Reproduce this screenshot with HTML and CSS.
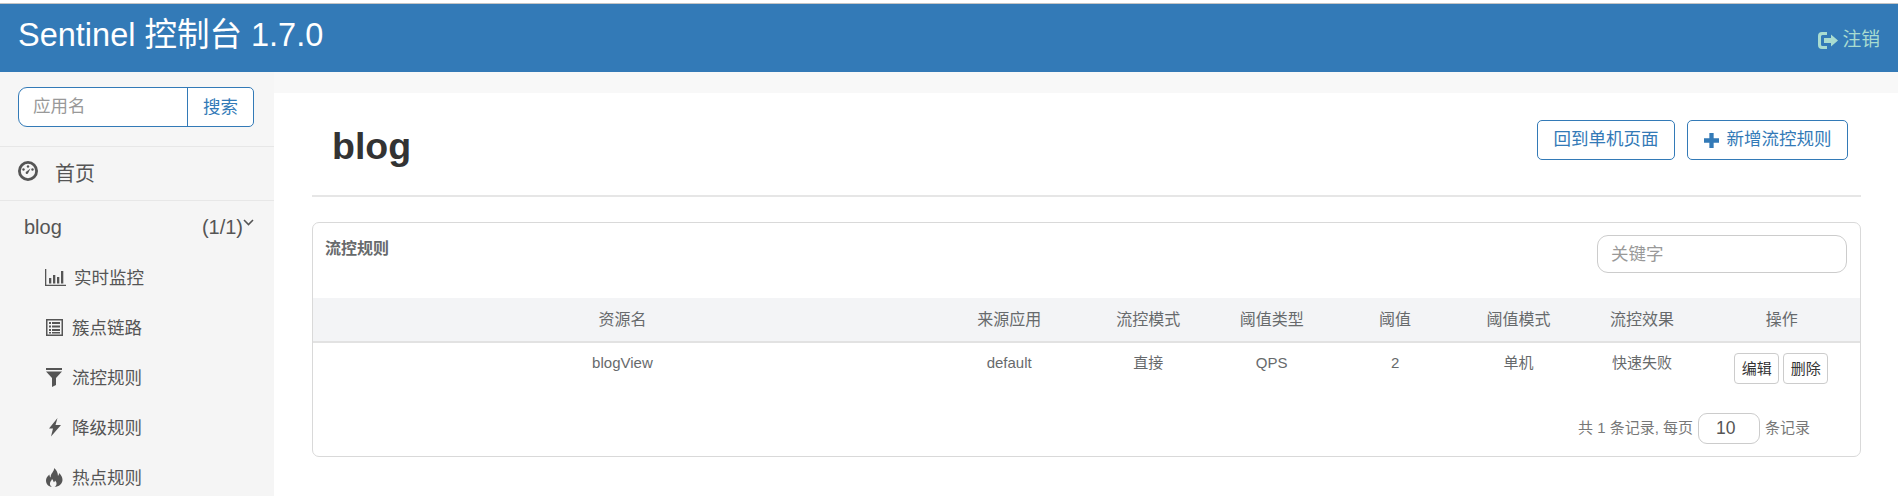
FILE: index.html
```html
<!DOCTYPE html>
<html lang="zh-CN">
<head>
<meta charset="utf-8">
<title>Sentinel 控制台</title>
<link rel="stylesheet" href="styles.css">
</head>
<body>
<header class="topbar">
  <span class="brand">Sentinel 控制台 1.7.0</span>
  <a class="logout">
    <svg class="logout-icon" viewBox="0 0 20 17"><path d="M4 0h5v3H4.500A1.500 1.500 0 0 0 3 4.500v8A1.500 1.500 0 0 0 4.500 14H9v3H4a4 4 0 0 1-4-4V4a4 4 0 0 1 4-4z"/><path d="M6 6h7V2.500l7 6-7 6V11H6z"/></svg>注销
  </a>
</header>
<div class="layout">
  <aside class="sidebar">
    <div class="side-search">
      <div class="search-group">
        <span class="search-input">应用名</span>
        <span class="search-btn">搜索</span>
      </div>
    </div>
    <div class="home-row">
      <svg class="home-icon" viewBox="0 0 20 20"><circle cx="10" cy="10" r="8.600" fill="none" stroke="#555" stroke-width="2.800"/><circle cx="10" cy="5.500" r="1.200"/><circle cx="5.500" cy="8.500" r="1.200"/><circle cx="14.500" cy="8.500" r="1.200"/><path d="M8.500 10.500l4-3-2.300 4.600a1.300 1.300 0 1 1-1.700-1.600z"/></svg>
      <span>首页</span>
    </div>
    <div class="app-row">
      <span>blog</span>
      <span class="app-count">(1/1)<svg class="chevron" viewBox="0 0 11 7"><path d="M1 1l4.500 4.500L10 1" fill="none" stroke="#555" stroke-width="1.600"/></svg></span>
    </div>
    <nav class="submenu">
      <div class="sub-row sub-row-first">
        <svg class="sub-icon icon-stats" viewBox="0 0 21 17"><path d="M0 0h1.300v15.700H21V17H0z"/><rect x="4" y="9" width="2.300" height="5.500"/><rect x="8" y="6" width="2.300" height="8.500"/><rect x="12" y="8" width="2.300" height="6.500"/><rect x="16" y="2" width="2.300" height="12.500"/></svg>
        <span>实时监控</span>
      </div>
      <div class="sub-row">
        <svg class="sub-icon" viewBox="0 0 17 19"><path fill-rule="evenodd" d="M0 1h17v17H0zM1.500 2.500v14h14v-14z"/><path d="M3 4h2v2H3zM6 4h8v2H6zM3 7.500h2v2H3zM6 7.500h8v2H6zM3 11h2v2H3zM6 11h8v2H6zM3 14h2v1.500H3zM6 14h8v1.500H6z"/></svg>
        <span>簇点链路</span>
      </div>
      <div class="sub-row">
        <svg class="sub-icon" viewBox="0 0 17 19"><path d="M0 0h16v2H0zM0 3.500h16L10 10v7l-4 2v-9z"/></svg>
        <span>流控规则</span>
      </div>
      <div class="sub-row">
        <svg class="sub-icon" viewBox="0 0 17 19"><path d="M11.500 0L9.500 7H15L5 18.500 7 10.500H3z"/></svg>
        <span>降级规则</span>
      </div>
      <div class="sub-row">
        <svg class="sub-icon" viewBox="0 0 17 19"><path d="M8 0c.8 3-3.800 5.500-3.300 9.500C3.800 8.800 3.400 7.600 3.500 6.500 1 8.500 0 10.500 0 12.500 0 16 2.500 18.500 6 19c-1.500-1-2.300-2.400-2-4 .3-1.400 1.500-2.300 2-4 1.500 1.500 1.200 2.800 2 3.300.6-.3.900-.9 1-1.800 1 1 1.500 2 1.500 3.200 0 1.400-.7 2.500-2 3.300 4.500-.3 8-3.300 8-7 0-3-1.300-5-3.500-7 .1 1.200-.3 2.200-1 3C11.800 5 11 2 8 0z"/></svg>
        <span>热点规则</span>
      </div>
    </nav>
  </aside>
  <main class="main">
    <div class="page-head">
      <h1 class="page-title">blog</h1>
      <div class="page-actions">
        <a class="btn-outline">回到单机页面</a>
        <a class="btn-outline btn-add"><svg class="plus-icon" viewBox="0 0 14 14"><path d="M5 0h4v5h5v4H9v5H5V9H0V5h5z"/></svg>新增流控规则</a>
      </div>
    </div>
    <section class="card">
      <div class="card-head">
        <span class="card-title">流控规则</span>
        <span class="keyword">关键字</span>
      </div>
      <table class="rules">
        <colgroup>
          <col class="col-wide"><col class="col-mid"><col class="col-sm"><col class="col-sm"><col class="col-sm"><col class="col-sm"><col class="col-sm"><col class="col-last">
        </colgroup>
        <thead>
          <tr><th>资源名</th><th>来源应用</th><th>流控模式</th><th>阈值类型</th><th>阈值</th><th>阈值模式</th><th>流控效果</th><th>操作</th></tr>
        </thead>
        <tbody>
          <tr>
            <td>blogView</td><td>default</td><td>直接</td><td>QPS</td><td>2</td><td>单机</td><td>快速失败</td>
            <td class="ops"><a class="btn-mini">编辑</a><a class="btn-mini">删除</a></td>
          </tr>
        </tbody>
      </table>
      <div class="pager">
        <span>共 1 条记录, 每页</span>
        <span class="page-size">10</span>
        <span>条记录</span>
      </div>
    </section>
  </main>
</div>
</body>
</html>
```

FILE: styles.css
```css
* { box-sizing: border-box; }
body {
  margin: 0;
  height: 496px;
  overflow: hidden;
  background: #fff;
  color: #555;
  font-family: "Liberation Sans", "Noto Sans CJK SC", sans-serif;
  font-size: 17.5px;
  line-height: 1.25;
}
.topbar {
  height: 69px;
  margin: 3px 1px 0 0;
  padding: 0 18px;
  border-top: 1px solid #c4c4c4;
  background: #337ab7;
  display: flex;
  justify-content: space-between;
  align-items: center;
}
.brand { color: #fff; font-size: 32.5px; position: relative; top: -3px; }
.logout {
  color: #a9dcd0;
  font-size: 18.75px;
  display: flex;
  align-items: center;
  gap: 5px;
  position: relative;
  top: 2px;
}
.logout-icon { width: 20px; height: 17px; fill: #a9dcd0; }
.layout { display: flex; height: 424px; margin-right: 1px; background: #f8f8f8; }
.sidebar { width: 274px; flex: none; background: #f5f5f5; }
.side-search {
  height: 75px;
  padding: 15px 20px 0 18px;
  border-bottom: 1px solid #e7e7e7;
  background: #f6f6f6;
}
.search-group {
  display: flex;
  height: 40px;
  border: 1px solid #337ab7;
  border-radius: 9px 5px 5px 9px;
  background: #fff;
  overflow: hidden;
}
.search-input {
  flex: 1;
  padding-left: 14px;
  color: #999;
  line-height: 36px;
}
.search-btn {
  width: 66px;
  border-left: 1px solid #337ab7;
  color: #337ab7;
  text-align: center;
  line-height: 38px;
}
.home-row {
  height: 54px;
  display: flex;
  align-items: center;
  gap: 17px;
  padding: 1px 0 0 18px;
  font-size: 20px;
  border-bottom: 1px solid #e7e7e7;
}
.home-icon { width: 20px; height: 20px; fill: #555; flex: none; position: relative; top: -3px; }
.app-row {
  height: 53px;
  display: flex;
  justify-content: space-between;
  align-items: center;
  padding: 0 20px 1px 24px;
  font-size: 20px;
}
.app-count { display: flex; align-items: flex-start; }
.chevron { width: 11px; height: 7px; margin-top: 4px; }
.sub-row {
  height: 50px;
  display: flex;
  align-items: center;
  gap: 9px;
  padding-left: 46px;
}
.sub-row-first { gap: 8px; padding-left: 45px; }
.sub-icon { width: 17px; height: 19px; fill: #555; flex: none; position: relative; top: -2px; }
.icon-stats { width: 21px; height: 17px; }
.main { flex: 1; margin-top: 21px; background: #fff; padding: 0 37px 0 38px; }
.page-head {
  height: 104px;
  display: flex;
  justify-content: space-between;
  padding-top: 27px;
  border-bottom: 2px solid #e6e6e6;
}
.page-title { margin: 2px 0 0 20px; font-size: 37.5px; line-height: 48px; color: #333; font-weight: 700; }
.page-actions { display: flex; gap: 12px; padding-right: 13px; align-items: flex-start; }
.btn-outline {
  height: 40px;
  padding: 0 15.500px;
  display: flex;
  align-items: center;
  color: #337ab7;
  border: 1px solid #337ab7;
  border-radius: 5px;
  background: #fff;
  white-space: nowrap;
}
.plus-icon { width: 15px; height: 15px; fill: #337ab7; margin-right: 8px; }
.card {
  margin-top: 25px;
  height: 235px;
  border: 1px solid #d9d9d9;
  border-radius: 7px;
  overflow: hidden;
}
.card-head {
  height: 75px;
  display: flex;
  justify-content: space-between;
  align-items: flex-start;
  padding: 12px 13px 0 12px;
}
.card-title { font-size: 16px; font-weight: 700; color: #676a6c; margin-top: 4px; }
.keyword {
  width: 250px;
  height: 38px;
  border: 1px solid #ccc;
  border-radius: 11px;
  padding-left: 13px;
  line-height: 36px;
  color: #999;
}
.rules { width: 100%; border-collapse: collapse; table-layout: fixed; color: #676a6c; }
.col-wide { width: 40%; }
.col-mid { width: 10%; }
.col-sm { width: 7.980%; }
.col-last { width: 10.100%; }
.rules th {
  height: 44px;
  padding: 0;
  background: #f3f4f6;
  border-bottom: 2px solid #e2e2e2;
  font-size: 16px;
  font-weight: 400;
}
.rules td {
  height: 71px;
  padding: 11px 0 0;
  text-align: center;
  vertical-align: top;
  font-size: 15px;
}
.rules td.ops { white-space: nowrap; padding: 10px 1px 0 0; }
.btn-mini {
  display: inline-block;
  vertical-align: top;
  width: 45px;
  height: 31px;
  line-height: 29px;
  margin: 0 2px;
  border: 1px solid #ccc;
  border-radius: 4px;
  color: #333;
  background: #fff;
}
.pager {
  display: flex;
  justify-content: flex-end;
  align-items: center;
  gap: 5px;
  padding-right: 50px;
  font-size: 15px;
  color: #777;
}
.page-size {
  width: 62px;
  height: 31px;
  border: 1px solid #ccc;
  border-radius: 9px;
  color: #555;
  font-size: 17.5px;
  line-height: 29px;
  padding-left: 17px;
}
```
